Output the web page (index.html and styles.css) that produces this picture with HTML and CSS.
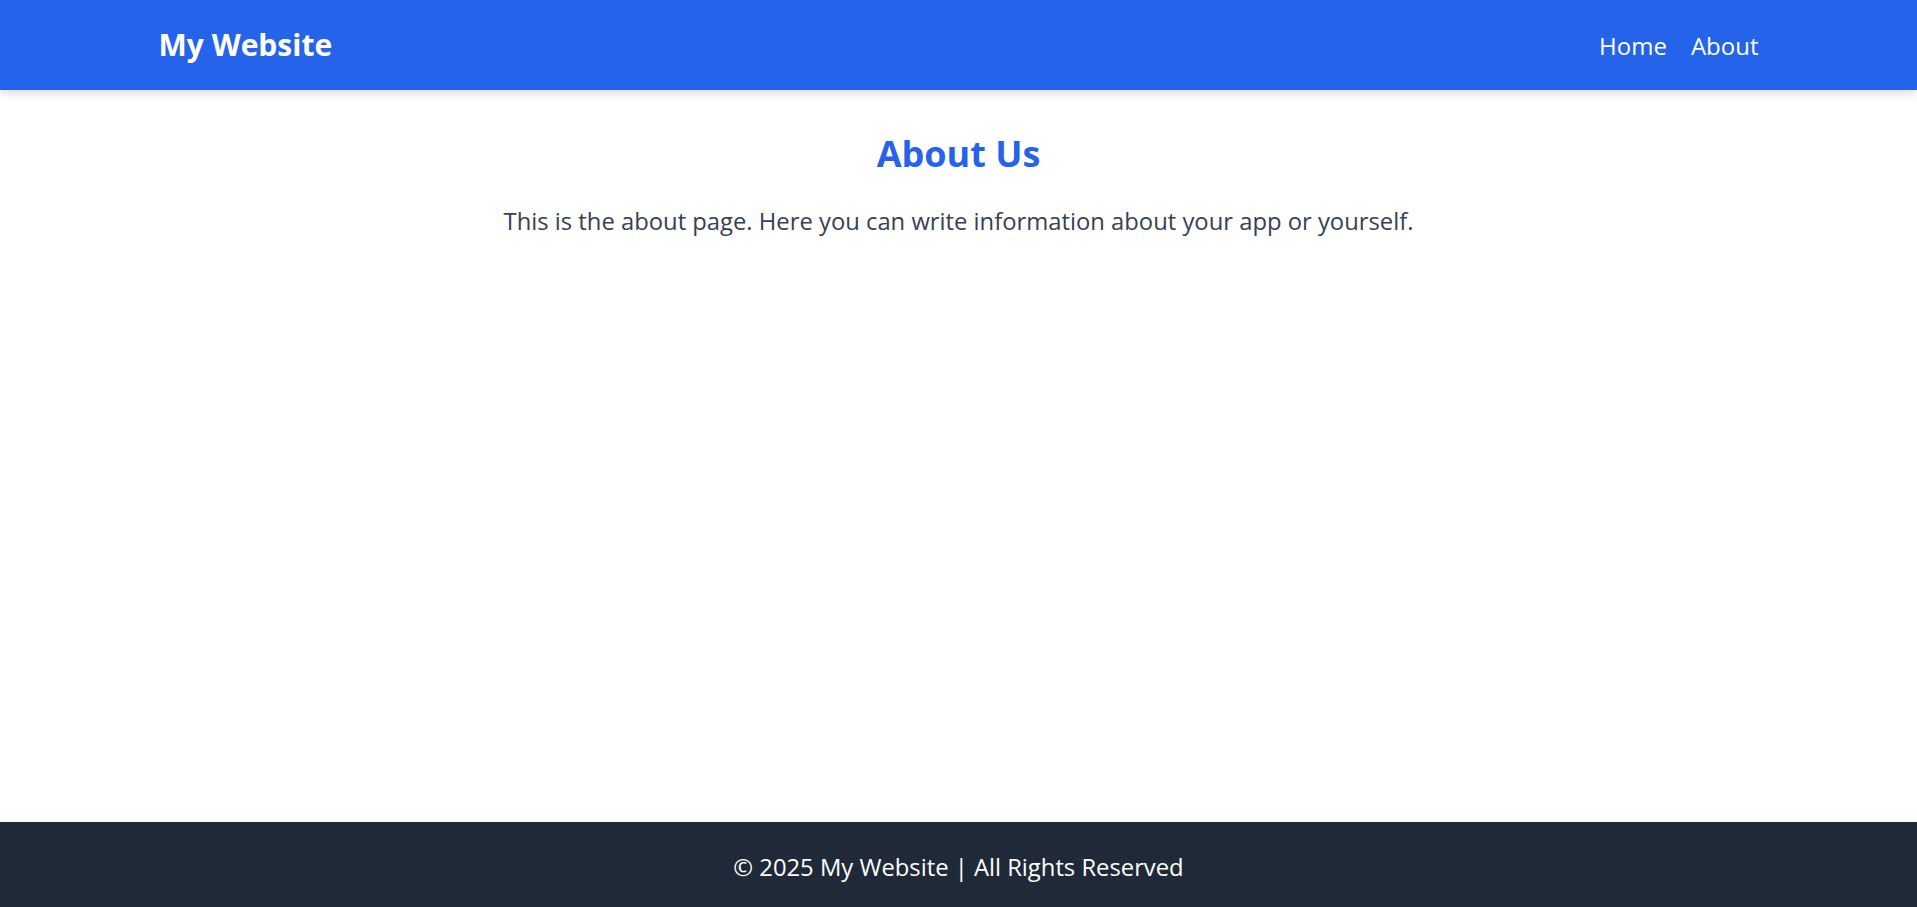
FILE: index.html
```html
<!DOCTYPE html>
<html lang="en">
<head>
<meta charset="utf-8">
<title>About - My Website</title>
<link rel="stylesheet" href="styles.css">
</head>
<body>
<header class="site-header">
  <div class="container header-inner">
    <a class="logo" href="#">My Website</a>
    <nav class="nav">
      <a href="#">Home</a>
      <a href="#">About</a>
    </nav>
  </div>
</header>
<main class="content">
  <h1 class="title">About Us</h1>
  <p class="lead">This is the about page. Here you can write information about your app or yourself.</p>
</main>
<footer class="site-footer">
  <p>&copy; 2025 My Website | All Rights Reserved</p>
</footer>
</body>
</html>
```
FILE: styles.css
```css
* { box-sizing: border-box; }
html, body { margin: 0; padding: 0; }
body {
  font-family: "Open Sans", "Noto Sans", sans-serif;
  min-height: 100vh;
  display: flex;
  flex-direction: column;
  background: #ffffff;
}
a { text-decoration: none; color: inherit; }
.container {
  max-width: 1600px;
  margin: 0 auto;
  width: 100%;
}
.site-header {
  background: #2563eb;
  color: #ffffff;
  height: 90px;
  box-shadow: 0 4px 8px rgba(0, 0, 0, 0.12);
  position: relative;
  z-index: 1;
}
.header-inner {
  height: 100%;
  display: flex;
  align-items: center;
  justify-content: space-between;
}
.logo {
  font-size: 30px;
  font-weight: 700;
  padding-bottom: 1px;
}
.nav {
  display: flex;
  gap: 24px;
  font-size: 24px;
}
.content {
  flex: 1;
  text-align: center;
  padding-top: 41px;
}
.title {
  margin: 0;
  color: #2563eb;
  font-size: 36px;
  font-weight: 700;
  line-height: 1.3;
}
.lead {
  margin: 27px 0 0;
  color: #374151;
  font-size: 23.8px;
}
.site-footer {
  background: #1f2937;
  color: #ffffff;
  height: 85px;
  padding-top: 4px;
  display: flex;
  align-items: center;
  justify-content: center;
}
.site-footer p {
  margin: 0;
  font-size: 23.8px;
}
```
